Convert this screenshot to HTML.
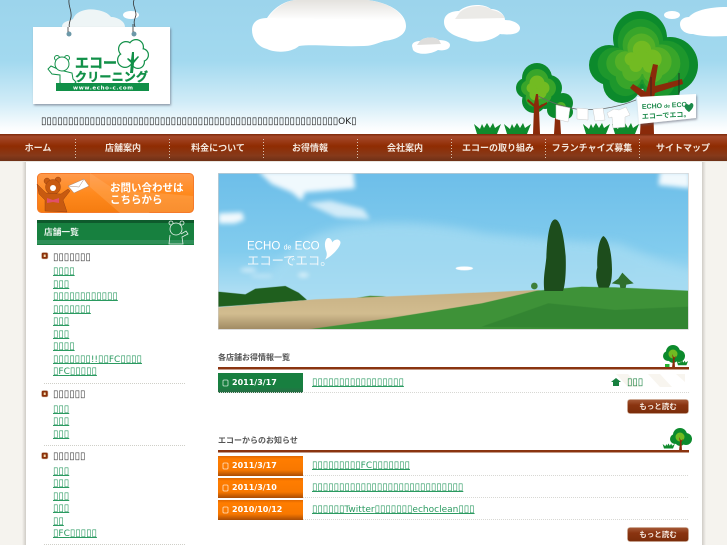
<!DOCTYPE html>
<html lang="ja"><head><meta charset="utf-8"><title>エコークリーニング</title>
<style>
html,body{margin:0;padding:0;background:#f5f3ee;}
body{position:relative;width:727px;height:545px;overflow:hidden;font-family:"DejaVu Sans",sans-serif;}
#art{position:absolute;left:0;top:0;}
.t{position:absolute;white-space:nowrap;font-size:9px;line-height:12px;margin-top:1px;}
.t i{font-style:normal;font-size:10px;letter-spacing:-.1px;}
.h{color:#444;}
a.t{color:#2a9a60;text-decoration:underline;}
.n{position:absolute;top:141px;width:94px;text-align:center;color:#f3e6dc;font:bold 9px/14px "Liberation Sans","Noto Sans CJK JP",sans-serif;white-space:nowrap;}
.d{position:absolute;left:232px;color:#fff;font:bold 8px/12px "DejaVu Sans",sans-serif;white-space:nowrap;}
.g{position:absolute;left:218px;color:#555;font:bold 8px/12px "Liberation Sans","Noto Sans CJK JP",sans-serif;white-space:nowrap;}
.m{position:absolute;left:627px;width:62px;text-align:center;color:#f5e8de;font:bold 7.5px/14px "Liberation Sans","Noto Sans CJK JP",sans-serif;}
</style></head><body>
<svg id="art" width="727" height="545" viewBox="0 0 727 545" xmlns="http://www.w3.org/2000/svg">
<defs>
<linearGradient id="sky" x1="0" y1="0" x2="0" y2="1"><stop offset="0" stop-color="#9cd4ec"/><stop offset=".45" stop-color="#a2d9ef"/><stop offset=".75" stop-color="#cfebf7"/><stop offset=".95" stop-color="#fbfdfe"/><stop offset="1" stop-color="#fff"/></linearGradient>
<linearGradient id="nav" x1="0" y1="0" x2="0" y2="1"><stop offset="0" stop-color="#7c2a0a"/><stop offset=".1" stop-color="#a5482a"/><stop offset=".45" stop-color="#8f2c02"/><stop offset=".8" stop-color="#86391a"/><stop offset="1" stop-color="#6e3016"/></linearGradient>
<linearGradient id="cl" x1="0" y1="0" x2="0" y2="1"><stop offset="0" stop-color="#e4e2de"/><stop offset="1" stop-color="#fff"/></linearGradient>
<linearGradient id="hsky" x1="0" y1="0" x2="0" y2="1"><stop offset="0" stop-color="#6dbee9"/><stop offset=".5" stop-color="#82ccee"/><stop offset=".85" stop-color="#bce4f5"/></linearGradient>
<linearGradient id="road" x1="0" y1="0" x2="0" y2="1"><stop offset="0" stop-color="#c8b184"/><stop offset=".6" stop-color="#d2bd90"/><stop offset="1" stop-color="#a08a62"/></linearGradient>
<linearGradient id="bn" x1="0" y1="0" x2="0" y2="1"><stop offset="0" stop-color="#ff9a4c"/><stop offset=".5" stop-color="#ff8a1e"/><stop offset="1" stop-color="#f57c10"/></linearGradient>
<linearGradient id="og" x1="0" y1="0" x2="0" y2="1"><stop offset="0" stop-color="#e06800"/><stop offset=".15" stop-color="#ff7d00"/><stop offset=".7" stop-color="#f87800"/><stop offset="1" stop-color="#a94c05"/></linearGradient>
<linearGradient id="gg" x1="0" y1="0" x2="0" y2="1"><stop offset="0" stop-color="#187f40"/><stop offset=".7" stop-color="#187f40"/><stop offset="1" stop-color="#2b6b46"/></linearGradient>
<linearGradient id="btn" x1="0" y1="0" x2="0" y2="1"><stop offset="0" stop-color="#a65a38"/><stop offset=".4" stop-color="#8a3410"/><stop offset="1" stop-color="#7a2c0a"/></linearGradient>
<linearGradient id="edgeL" x1="0" y1="0" x2="1" y2="0"><stop offset="0" stop-color="#f5f3ee"/><stop offset="1" stop-color="#cfccc6"/></linearGradient>
<linearGradient id="edgeR" x1="0" y1="0" x2="1" y2="0"><stop offset="0" stop-color="#cfccc6"/><stop offset="1" stop-color="#f5f3ee"/></linearGradient>
<filter id="b1"><feGaussianBlur stdDeviation="7"/></filter>
<filter id="b2"><feGaussianBlur stdDeviation="14"/></filter>
<filter id="s1" x="-10%" y="-10%" width="120%" height="120%"><feDropShadow dx="1" dy="1.5" stdDeviation="1" flood-color="#556" flood-opacity=".55"/></filter>
<g id="lobes"><circle cx="640" cy="38" r="27"/><circle cx="609" cy="65" r="20"/><circle cx="670" cy="65" r="28"/><circle cx="622" cy="84" r="19"/><circle cx="662" cy="86" r="19"/><circle cx="640" cy="65" r="24"/></g>
<g id="lobes2"><circle cx="537" cy="78" r="15"/><circle cx="526" cy="88" r="10"/><circle cx="549" cy="88" r="13"/><circle cx="534" cy="101" r="12"/><circle cx="545" cy="98" r="11"/></g>
<path id="tuft" d="M0 10L-3 0l6 5 2-5 2 4 3-5 3 5 3-5 2 5 6-4-4 10z" fill="#0f8a2c"/>
<g id="tree"><circle cx="10" cy="6" r="7" fill="#0c8a2c"/><circle cx="5" cy="10" r="5" fill="#0c8a2c"/><circle cx="16" cy="10" r="6" fill="#0c8a2c"/><circle cx="10" cy="12" r="5" fill="#0c8a2c"/><circle cx="10" cy="8" r="4.500" fill="#72bb22"/><path d="M9 22h3l-.5-9 2-3-2.500 1.500L9 8l1 5z" fill="#8a2a0a"/></g>
</defs>

<!-- page background and column edges -->
<rect width="727" height="545" fill="#f5f3ee"/>
<rect x="26" y="161" width="676" height="384" fill="#fff"/>
<rect x="22" y="161" width="4" height="384" fill="url(#edgeL)"/>
<rect x="702" y="161" width="4" height="384" fill="url(#edgeR)"/>

<!-- sky -->
<rect width="727" height="135" fill="url(#sky)"/>
<g fill="#fff">
<path d="M62 27c0-6 8-6 11-8 3-8 14-11 24-9 6 1 11 3 14 7 6 0 14 4 14 10z" fill="#eef5f6"/>
<ellipse cx="131" cy="15" rx="8" ry="4"/>
<path d="M252 30c0-8 6-12 15-12 8-12 20-18 30-18h70c20 2 39 12 39 26 0 10-12 14-22 15-8 3-14 5-20 5-30 1-50-2-65 0-8 7-24 7-32 3-8-2-15-9-15-19z"/>
<path d="M268 18c8-12 20-18 29-18h70c18 2 32 9 37 20z" fill="url(#cl)"/>
<path d="M444 22c0-9 9-11 15-11 8-7 24-8 32-2 8 0 14 6 14 11 8 0 15 4 15 8 0 7-12 7-20 6-6 6-24 11-34 5-10-2-22-7-22-17z"/>
<path d="M460 12c8-7 24-8 32-2 6 1 11 4 13 8l-50 1z" fill="#e6e5e1" opacity=".8"/>
<path d="M412 46c0-4 5-5 8-5 4-4 14-5 19-1 6 0 11 2 11 5 0 5-7 6-12 5-6 4-20 6-25 0z"/>
<path d="M420 41c4-4 14-5 19-1l2 4-24 1z" fill="#dedddb"/>
<path d="M680 24c0-5 5-7 9-7 5-6 18-10 38-10v29c-14 1-28 0-34-2-8 0-13-4-13-10z"/>
<ellipse cx="672" cy="15" rx="8" ry="4"/>
</g>

<!-- trees -->
<g fill="#0c8a2c"><use href="#lobes"/></g>
<g fill="#1d972c" transform="translate(643 60) scale(.84) translate(-643 -60)"><use href="#lobes"/></g>
<g fill="#38a52a" transform="translate(643 60) scale(.68) translate(-643 -60)"><use href="#lobes"/></g>
<g fill="#54b027" transform="translate(643 58) scale(.52) translate(-643 -58)"><use href="#lobes"/></g>
<g fill="#72bb22" transform="translate(643 56) scale(.34) translate(-643 -56)"><use href="#lobes"/></g>
<g fill="#0c8a2c"><circle cx="563" cy="103" r="10"/><circle cx="555" cy="110" r="8"/><circle cx="566" cy="112" r="7"/></g>
<circle cx="561" cy="107" r="5" fill="#54b027"/>
<path d="M555 118h5l1 16h-7z" fill="#8a2a0a"/>
<g fill="#0c8a2c"><use href="#lobes2"/></g>
<g fill="#38a52a" transform="translate(537 88) scale(.76) translate(-537 -88)"><use href="#lobes2"/></g>
<g fill="#72bb22" transform="translate(537 88) scale(.5) translate(-537 -88)"><use href="#lobes2"/></g>
<path d="M536 94l2 0 1 12 8-4 0 2-8 5 1 25h-7l1-27-7-6 1-2 6 5z" fill="#8a2a0a"/>
<path d="M640 134l2-36-12-10 3-4 13 8 3-11 4-17 5 1-3 18 0 3 27-7 1 5-28 9-2 8 1 33z" fill="#8a2a0a"/>
<use href="#tuft" x="477" y="124"/><use href="#tuft" x="507" y="124" />
<use href="#tuft" x="586" y="124"/><use href="#tuft" x="615" y="124"/>

<!-- clothesline -->
<path d="M538 96q20 10 38 13 30 3 60-9" fill="none" stroke="#666" stroke-width=".7"/>
<g fill="#fff" stroke="#ccc" stroke-width=".5">
<path d="M556 105l14 3-2 14-12-3z"/><path d="M577 108l11 1 0 11-11-1z"/><path d="M593 109l10-1 2 12-10 1z"/>
<path d="M607 113l7-4 5 1 7-3 4 8-5 2 0 10-12 1-1-11-3 1z"/>
</g>
<path d="M651 77v20M679 73v24" stroke="#222" stroke-width=".8"/>
<polygon points="637,97 696,94 696,118 639,124" fill="#fff" filter="url(#s1)"/>
<text x="642" y="109" font-family="Liberation Sans" font-size="7" font-weight="bold" fill="#1c8a4a" transform="rotate(-3 642 109)">ECHO <tspan font-size="5">de</tspan> ECO</text>
<text x="642" y="119" font-family="Liberation Sans,Noto Sans CJK JP,sans-serif" font-size="7" font-weight="bold" fill="#1c8a4a" transform="rotate(-3 642 119)">エコーでエコ。</text>
<path d="M689 112c-6-4-5-8-2-8l2 1 2-2c3 0 4 4-2 9z" fill="#1c8a4a"/>

<!-- hanging sign -->
<path d="M69 0c-1 6 3 10 2 17-1 5-3 8-1 12M134 0c-2 5 2 9 2 15-1 4-3 6-1 12" fill="none" stroke="#333" stroke-width=".8"/>
<rect x="33" y="27" width="137" height="77" fill="#fff" filter="url(#s1)"/>
<circle cx="69" cy="34" r="2.500" fill="#6c98a8"/><circle cx="134" cy="34" r="2.500" fill="#6c98a8"/>
<path d="M68 27v5M133 24v8" stroke="#333" stroke-width=".8"/>
<!-- logo -->
<g fill="#119048"><circle cx="126" cy="49" r="8"/><circle cx="136" cy="47" r="8"/><circle cx="142" cy="55" r="7"/><circle cx="138" cy="62" r="7"/><circle cx="125" cy="60" r="8"/></g>
<g fill="#fff"><circle cx="126" cy="49" r="6.800"/><circle cx="136" cy="47" r="6.800"/><circle cx="142" cy="55" r="5.800"/><circle cx="138" cy="62" r="5.800"/><circle cx="125" cy="60" r="6.800"/><circle cx="133" cy="55" r="8"/></g>
<path d="M132 52h2v8l4-4 1 1-5 6-1 10h-3l1-10-4-4 1-1 3 2z" fill="#119048"/>
<g fill="#fff" stroke="#119048" stroke-width="1">
<circle cx="57" cy="58" r="2.500"/><circle cx="67" cy="58" r="2.500"/>
<path d="M60 70l-9-4-3 3 4 5 8 1 0 8 4 2 10-1 2-2-3-3-1-6z"/>
<circle cx="62" cy="64" r="7"/>
</g>
<rect x="56" y="83" width="93" height="8" fill="#119048"/>
<text x="75" y="68" font-family="Liberation Sans,Noto Sans CJK JP,sans-serif" font-size="14" font-weight="bold" fill="#119048" stroke="#119048" stroke-width=".4">エコー</text>
<text x="75" y="81" font-family="Liberation Sans,Noto Sans CJK JP,sans-serif" font-size="12" font-weight="bold" fill="#119048" stroke="#119048" stroke-width=".4" textLength="73">クリーニング</text>
<text x="73" y="89.500" font-family="DejaVu Sans" font-size="5.500" font-weight="bold" fill="#fff" textLength="60">www.echo-c.com</text>

<!-- nav -->
<rect y="134" width="727" height="27" fill="url(#nav)"/>
<rect y="161" width="727" height="1" fill="#e9e6e0"/>
<g stroke="#d9c4b2" stroke-width="1" stroke-dasharray="1 2">
<path d="M75.500 139v20M169.500 139v20M263.500 139v20M357.500 139v20M451.500 139v20M545.500 139v20M639.500 139v20"/>
</g>

<!-- contact banner -->
<rect x="37.500" y="173.500" width="156" height="39" rx="4" fill="url(#bn)" stroke="#f57a2a"/>
<path d="M90 173l60 40h-30l-30-26z M120 190l73 6v12a4 4 0 0 1-4 4h-60z" fill="#ffb36a" opacity=".35"/>
<g fill="#c85a10" stroke="#8a3a10" stroke-width=".4">
<circle cx="47" cy="181" r="3"/><circle cx="58" cy="180" r="3"/><circle cx="53" cy="187" r="7.500"/>
<path d="M46 193l-9-9 2 10 6 6 0 11 22 1-4-12 7-9-2-2-7 5z"/>
</g>
<circle cx="53" cy="188" r="3" fill="#fff"/><path d="M47 198l6 2 6-2v5l-6-1-6 1z" fill="#e0506a"/>
<path d="M68 186l16-7 5 7-15 7z" fill="#fff" stroke="#a87" stroke-width=".5"/><path d="M68 186l11 1 5-8" fill="none" stroke="#a87" stroke-width=".5"/>

<!-- side header -->
<rect x="37" y="220" width="157" height="25" fill="#17803f"/>
<rect x="37" y="220" width="157" height="3" fill="#0e5a2c"/>
<rect x="37" y="240" width="157" height="4" fill="#2e8f58"/>
<g fill="none" stroke="#e8f3ec" stroke-width=".8"><circle cx="171" cy="223" r="2"/><circle cx="182" cy="223" r="2"/><circle cx="176" cy="229" r="6" fill="#17803f"/><path d="M170 235l-1 9h14l-1-7 6-3-2-3-5 3"/></g>

<!-- bullets -->
<g fill="#8a2f08" stroke="#d9c9bc" stroke-width=".6">
<rect x="41.500" y="252.500" width="6.500" height="6.500" rx="1.500"/><rect x="41.500" y="390.500" width="6.500" height="6.500" rx="1.500"/><rect x="41.500" y="452.500" width="6.500" height="6.500" rx="1.500"/>
</g>
<g fill="#f3dcb0"><rect x="43.700" y="254.500" width="2" height="2.500"/><rect x="43.700" y="392.500" width="2" height="2.500"/><rect x="43.700" y="454.500" width="2" height="2.500"/></g>
<g stroke="#cfcfc8" stroke-dasharray="1 1"><path d="M44 383.500h142M44 445.500h142M44 544.500h142"/></g>

<!-- hero -->
<g transform="translate(215 170) scale(.33333)">
<rect x="9" y="9" width="1412" height="470" fill="#ccc"/>
<rect x="11" y="11" width="1408" height="466" fill="url(#hsky)"/>
<clipPath id="hc"><rect x="11" y="11" width="1408" height="466"/></clipPath>
<g clip-path="url(#hc)">
<path d="M130 390q60-180 260-220 200-30 420 20 300 30 400 30 180 80 380 130v60H130z" fill="#a5dbf2" filter="url(#b2)" opacity=".8"/>
<g fill="#fff" filter="url(#b1)" opacity=".9">
<path d="M130 5h285l5 50-150 12-10 25-30-25-60-25z"/><path d="M275 100l70-8 100 25 20 30-100-5z" opacity=".75"/>
<path d="M11 130l70-3 7 22-30 12H11z"/><path d="M1335 5h90v50l-95-10z"/><ellipse cx="100" cy="300" rx="24" ry="7" opacity=".6"/><ellipse cx="265" cy="315" rx="16" ry="7" opacity=".7"/><ellipse cx="140" cy="318" rx="34" ry="7" opacity=".35"/>
</g>
<ellipse cx="748" cy="295" rx="26" ry="6" fill="#fff"/>
<path d="M11 365l80 8 30-17 90-8 40 20 25 22-190 15-75 5z" fill="#1f5f1e"/>
<path d="M415 385l50-8 50 2-60 8z" fill="#4f8f3c"/>
<path d="M11 412l290-24 300-12 370-16 20 4-200 45-200 40-170 30H11z" fill="url(#road)"/>
<path d="M280 478l240-33 280-45 165-38 135-12 100 2 220 10v116z" fill="#3e9238"/>
<path d="M800 470l200-70 200 20 220-10v68z" fill="#2f8030" opacity=".7"/>
<path d="M1020 148c18 0 28 60 32 110 2 50-2 90-8 105h-56c-4-40 2-60 6-100 2-60 10-115 26-115z" fill="#1d4d1c"/>
<path d="M1165 198c18 10 26 60 26 100 0 30-4 45-10 55h-30c-8-20-10-40-4-60-2-40 4-85 18-95z" fill="#1d4d1c"/>
<path d="M1222 308l22 22 12 10-22 4-2 10h-16l-2-10-24-4 20-14z" fill="#2f6f2e"/>
<circle cx="958" cy="348" r="10" fill="#3e7f3a"/>
</g>
<text x="96" y="239" font-family="Liberation Sans,sans-serif" font-size="36" fill="#fff" textLength="218" lengthAdjust="spacingAndGlyphs">ECHO <tspan font-size="22">de</tspan> ECO</text>
<text x="96" y="285" font-family="Liberation Sans,Noto Sans CJK JP,sans-serif" font-size="37" fill="#f2f8fb">エコーでエコ。</text>
<path d="M336 205c-10 10-6 30-2 40 4 12-2 20-4 24 20-10 50-40 46-54-4-10-18-8-24 2-2-8-8-16-16-12z" fill="#fff"/>
</g>

<!-- section 1 -->
<use href="#tree" x="663" y="346"/>
<use href="#tuft" x="678" y="361" transform="translate(678 361) scale(.42) translate(-678 -361)"/>
<rect x="665" y="364" width="4.500" height="3" fill="#27b530"/>
<rect x="218" y="367" width="471" height="2.500" fill="#8a3410"/>
<rect x="218" y="373" width="85" height="20" fill="url(#gg)"/>
<rect x="223" y="380" width="5" height="6" rx="1" fill="none" stroke="#cfe6d8" stroke-width=".8"/>
<g fill="#f8f5ef"><path d="M616 374h12l12 13h-12zM648 374h12l12 13h-12zM676 374h9v8z"/></g>
<path d="M616 378l-5 4h2v4h6v-4h2z" fill="#17803f"/>
<path d="M218 392.500h471" stroke="#d8d8d4" stroke-dasharray="1 1"/>
<rect x="627.500" y="399.500" width="61" height="14" rx="2.500" fill="url(#btn)" stroke="#c9a892" stroke-width=".6"/>

<!-- section 2 -->
<use href="#tree" x="670" y="429"/>
<use href="#tuft" x="664" y="444" transform="translate(664 444) scale(.45) translate(-664 -444)"/>
<rect x="218" y="450" width="471" height="2.500" fill="#8a3410"/>
<g>
<rect x="218" y="456" width="85" height="20" fill="url(#og)"/><rect x="218" y="478" width="85" height="20" fill="url(#og)"/><rect x="218" y="500" width="85" height="20" fill="url(#og)"/>
<g fill="none" stroke="#ffe3c6" stroke-width=".8"><rect x="223" y="463" width="5" height="6" rx="1"/><rect x="223" y="485" width="5" height="6" rx="1"/><rect x="223" y="507" width="5" height="6" rx="1"/></g>
</g>
<path d="M303 475.500h386M303 497.500h386M303 519.500h386" stroke="#d8d8d4" stroke-dasharray="1 1"/>
<rect x="627.500" y="527.500" width="61" height="14" rx="2.500" fill="url(#btn)" stroke="#c9a892" stroke-width=".6"/>
</svg>

<div class="t" style="left:41px;top:115px;color:#222"><i>▯▯▯▯▯▯▯▯▯▯▯▯▯▯▯▯▯▯▯▯▯▯▯▯▯▯▯▯▯▯▯▯▯▯▯▯▯▯▯▯▯▯▯▯▯▯▯▯▯▯▯▯▯▯▯</i>OK<i>▯</i></div>

<div class="n" style="left:-9px">ホーム</div>
<div class="n" style="left:76px">店舗案内</div>
<div class="n" style="left:171px">料金について</div>
<div class="n" style="left:263px">お得情報</div>
<div class="n" style="left:358px">会社案内</div>
<div class="n" style="left:451px">エコーの取り組み</div>
<div class="n" style="left:545px">フランチャイズ募集</div>
<div class="n" style="left:636px">サイトマップ</div>

<div style="position:absolute;left:110px;top:182px;color:#fff;font:bold 10.5px/12px 'Liberation Sans','Noto Sans CJK JP',sans-serif;white-space:nowrap">お問い合わせは<br>こちらから</div>
<div style="position:absolute;left:44px;top:226px;color:#e8f3ec;font:bold 8.7px/13px 'Liberation Sans','Noto Sans CJK JP',sans-serif">店舗一覧</div>

<div class="t h" style="left:53px;top:251px"><i>▯▯▯▯▯▯▯</i></div>
<a class="t" style="left:53px;top:265px"><i>▯▯▯▯</i></a>
<a class="t" style="left:53px;top:278px"><i>▯▯▯</i></a>
<a class="t" style="left:53px;top:290px"><i>▯▯▯▯▯▯▯▯▯▯▯▯</i></a>
<a class="t" style="left:53px;top:303px"><i>▯▯▯▯▯▯▯</i></a>
<a class="t" style="left:53px;top:315px"><i>▯▯▯</i></a>
<a class="t" style="left:53px;top:328px"><i>▯▯▯</i></a>
<a class="t" style="left:53px;top:340px"><i>▯▯▯▯</i></a>
<a class="t" style="left:53px;top:353px"><i>▯▯▯▯▯▯▯</i>!!<i>▯▯</i>FC<i>▯▯▯▯</i></a>
<a class="t" style="left:53px;top:365px"><i>▯</i>FC<i>▯▯▯▯▯</i></a>
<div class="t h" style="left:53px;top:388px"><i>▯▯▯▯▯▯</i></div>
<a class="t" style="left:53px;top:403px"><i>▯▯▯</i></a>
<a class="t" style="left:53px;top:415px"><i>▯▯▯</i></a>
<a class="t" style="left:53px;top:428px"><i>▯▯▯</i></a>
<div class="t h" style="left:53px;top:450px"><i>▯▯▯▯▯▯</i></div>
<a class="t" style="left:53px;top:465px"><i>▯▯▯</i></a>
<a class="t" style="left:53px;top:477px"><i>▯▯▯</i></a>
<a class="t" style="left:53px;top:490px"><i>▯▯▯</i></a>
<a class="t" style="left:53px;top:502px"><i>▯▯▯</i></a>
<a class="t" style="left:53px;top:515px"><i>▯▯</i></a>
<a class="t" style="left:53px;top:527px"><i>▯</i>FC<i>▯▯▯▯▯</i></a>

<div class="g" style="top:352px">各店舗お得情報一覧</div>
<div class="d" style="top:377px">2011/3/17</div>
<a class="t" style="left:312px;top:376px"><i>▯▯▯▯▯▯▯▯▯▯▯▯▯▯▯▯▯</i></a>
<a class="t" style="left:627px;top:376px;text-decoration:none;color:#17803f"><i>▯▯▯</i></a>
<div class="m" style="top:400px">もっと読む</div>

<div class="g" style="top:435px">エコーからのお知らせ</div>
<div class="d" style="top:460px">2011/3/17</div>
<a class="t" style="left:312px;top:459px"><i>▯▯▯▯▯▯▯▯▯</i>FC<i>▯▯▯▯▯▯▯</i></a>
<div class="d" style="top:482px">2011/3/10</div>
<a class="t" style="left:312px;top:481px"><i>▯▯▯▯▯▯▯▯▯▯▯▯▯▯▯▯▯▯▯▯▯▯▯▯▯▯▯▯</i></a>
<div class="d" style="top:504px">2010/10/12</div>
<a class="t" style="left:312px;top:503px"><i>▯▯▯▯▯▯</i>Twitter<i>▯▯▯▯▯▯▯</i>echoclean<i>▯▯▯</i></a>
<div class="m" style="top:528px">もっと読む</div>
</body></html>
